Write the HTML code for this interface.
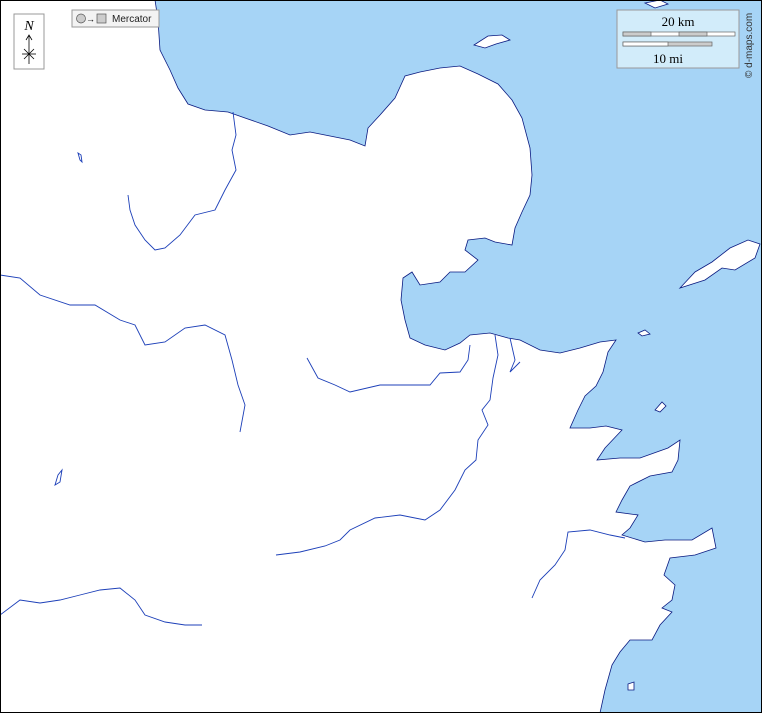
<!DOCTYPE html>
<html><head><meta charset="utf-8"><style>
html,body{margin:0;padding:0;background:#fff}
svg{display:block}
</style></head><body>
<svg width="762" height="713" viewBox="0 0 762 713" xmlns="http://www.w3.org/2000/svg">
<rect x="0" y="0" width="762" height="713" fill="#fff"/>
<path d="M155,0 L158,20 L160,50 L170,70 L178,88 L188,104 L205,110 L228,112 L245,118 L268,126 L290,135 L310,132 L330,136 L350,140 L365,146 L368,128 L380,115 L395,98 L405,76 L420,72 L440,68 L460,66 L478,74 L498,84 L512,100 L522,118 L530,148 L532,175 L530,195 L522,212 L515,228 L512,245 L495,242 L485,238 L468,240 L465,250 L478,260 L465,272 L450,272 L440,282 L420,285 L412,272 L403,278 L401,300 L405,320 L410,338 L425,345 L445,350 L460,343 L470,335 L490,333 L508,338 L520,340 L540,350 L560,353 L580,348 L600,342 L616,340 L608,352 L603,372 L596,386 L585,396 L578,410 L570,428 L590,428 L606,426 L622,430 L605,448 L597,460 L620,458 L640,458 L668,448 L680,440 L678,460 L672,472 L650,476 L630,486 L622,500 L616,512 L638,515 L630,528 L622,535 L645,542 L665,540 L692,540 L712,528 L716,548 L695,555 L670,558 L664,575 L675,585 L672,600 L662,608 L672,612 L660,625 L652,640 L630,640 L620,652 L612,665 L605,690 L600,713 L762,713 L762,0 Z" fill="#a6d4f6" stroke="#0a1a80" stroke-width="0.8"/>
<path d="M680,288 L695,272 L712,262 L730,248 L748,240 L760,244 L755,258 L735,270 L722,268 L705,280 Z" fill="#fff" stroke="#0a1a80" stroke-width="0.8"/>
<path d="M474,45 L488,36 L502,35 L510,40 L496,44 L485,48 Z" fill="#fff" stroke="#0a1a80" stroke-width="0.8"/>
<path d="M655,410 L662,402 L666,406 L660,412 Z" fill="#fff" stroke="#0a1a80" stroke-width="0.8"/>
<path d="M638,333 L645,330 L650,334 L642,336 Z" fill="#fff" stroke="#0a1a80" stroke-width="0.8"/>
<path d="M628,684 L634,682 L634,690 L628,690 Z" fill="#fff" stroke="#0a1a80" stroke-width="0.8"/>
<path d="M645,3 L660,0 L668,4 L655,8 Z" fill="#fff" stroke="#0a1a80" stroke-width="0.8"/>
<g fill="none" stroke="#1c3fb8" stroke-width="0.9">
<path d="M233,112 L236,135 L232,150 L236,170 L225,190 L215,210 L195,215 L180,235 L165,248 L155,250 L145,240 L135,225 L130,210 L128,195"/>
<path d="M0,275 L20,278 L40,295 L70,305 L95,305 L120,320 L135,325 L145,345 L165,342 L185,328 L205,325 L225,335 L232,360 L238,385 L245,405 L240,432"/>
<path d="M307,358 L318,378 L335,385 L350,392 L380,385 L405,385 L430,385 L440,373 L460,372 L468,360 L470,345"/>
<path d="M495,335 L498,355 L493,378 L490,400 L482,410 L488,425 L478,440 L476,460 L465,470 L455,490 L440,510 L425,520 L400,515 L375,518 L350,530 L340,540 L325,546 L300,552 L276,555"/>
<path d="M510,338 L515,360 L510,372 L520,362"/>
<path d="M0,615 L20,600 L40,603 L60,600 L80,595 L100,590 L120,588 L135,600 L145,615 L165,622 L185,625 L202,625"/>
<path d="M532,598 L540,580 L555,565 L565,550 L568,532 L590,530 L610,535 L625,538"/>
<path d="M78,153 L81,155 L82,162 L80,160 Z"/>
<path d="M55,485 L58,475 L62,470 L60,482 Z"/>
</g>
<rect x="14" y="14" width="30" height="55" fill="#fff" stroke="#999"/>
<text x="29" y="30" font-family="Liberation Serif,serif" font-style="italic" font-size="14" text-anchor="middle">N</text>
<g stroke="#000" stroke-width="0.8"><line x1="29" y1="36" x2="29" y2="64"/><path d="M26,40 L29,35 L32,40" fill="none"/><line x1="22" y1="54" x2="36" y2="54"/><line x1="24" y1="49" x2="34" y2="59"/><line x1="34" y1="49" x2="24" y2="59"/></g>
<rect x="72" y="10" width="87" height="17" fill="#f3f3f3" stroke="#999"/>
<circle cx="81" cy="18.5" r="4.5" fill="#ccc" stroke="#555" stroke-width="0.7"/>
<text x="86" y="22" font-family="Liberation Sans,sans-serif" font-size="9">→</text>
<rect x="97" y="14" width="9" height="9" fill="#ccc" stroke="#555" stroke-width="0.7"/>
<text x="112" y="22" font-family="Liberation Sans,sans-serif" font-size="10" fill="#222">Mercator</text>
<rect x="617" y="10" width="122" height="58" fill="#d2ecfa" stroke="#999"/>
<text x="678" y="26" font-family="Liberation Serif,serif" font-size="13" text-anchor="middle">20 km</text>
<rect x="623" y="32" width="112" height="4" fill="#fff" stroke="#666" stroke-width="0.7"/>
<rect x="623" y="32" width="28" height="4" fill="#ccc" stroke="#666" stroke-width="0.7"/>
<rect x="679" y="32" width="28" height="4" fill="#ccc" stroke="#666" stroke-width="0.7"/>
<rect x="623" y="42" width="89" height="4" fill="#ccc" stroke="#666" stroke-width="0.7"/>
<rect x="623" y="42" width="45" height="4" fill="#fff" stroke="#666" stroke-width="0.7"/>
<text x="668" y="63" font-family="Liberation Serif,serif" font-size="13" text-anchor="middle">10 mi</text>
<text transform="translate(752,78) rotate(-90)" font-family="Liberation Sans,sans-serif" font-size="10" fill="#333">© d-maps.com</text>
<rect x="0.5" y="0.5" width="761" height="712" fill="none" stroke="#000" stroke-width="1"/>
</svg>
</body></html>
